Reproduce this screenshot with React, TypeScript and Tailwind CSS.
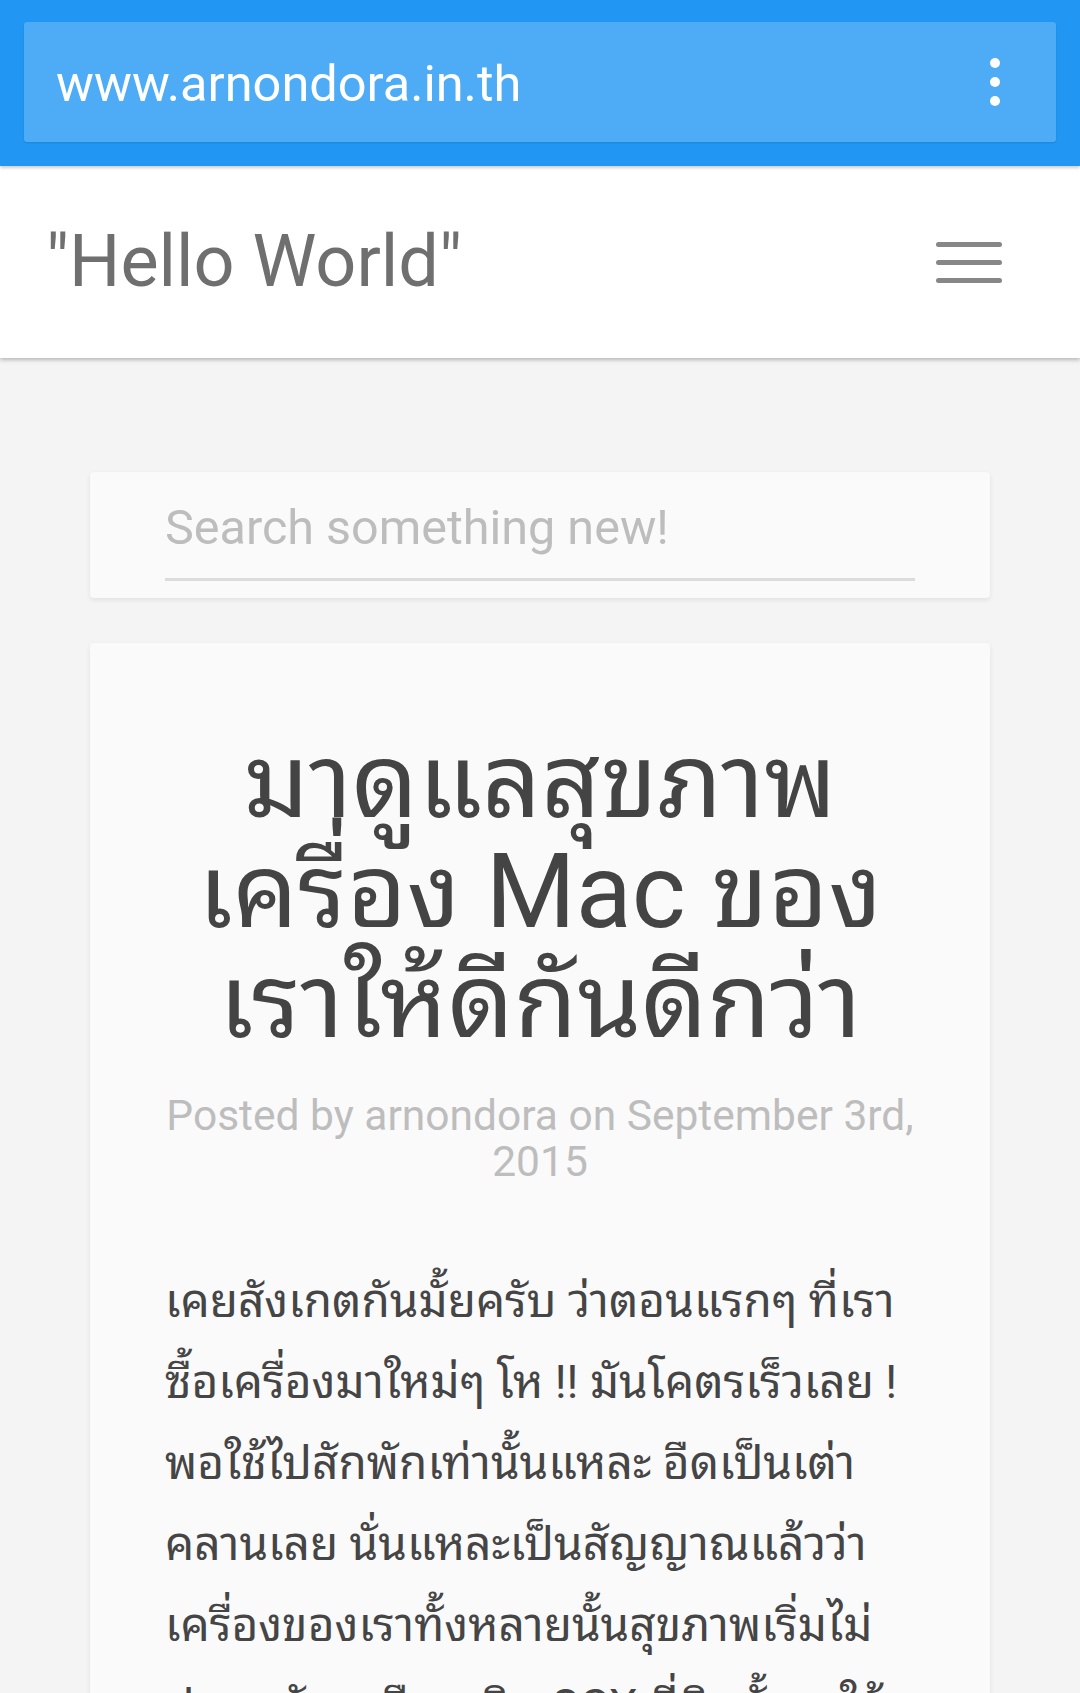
import React from "react";

export default function App() {
  const body = [
    "เคยสังเกตกันมั้ยครับ ว่าตอนแรกๆ ที่เรา",
    "ซื้อเครื่องมาใหม่ๆ โห !! มันโคตรเร็วเลย !",
    "พอใช้ไปสักพักเท่านั้นแหละ อืดเป็นเต่า",
    "คลานเลย นั่นแหละเป็นสัญญาณแล้วว่า",
    "เครื่องของเราทั้งหลายนั้นสุขภาพเริ่มไม่",
    "ปลอดภัยเหมือนเดิม OSX ที่ติดตั้งมาให้",
  ];
  return (
    <div className="w-[1080px] h-[1693px] overflow-hidden bg-[#f4f4f4] font-['Roboto','Noto_Sans_Thai_Looped','Loma','Garuda','Tlwg_Typist','Noto_Sans','Noto_Sans_Thai',sans-serif]">
      {/* browser bar */}
      <div className="relative z-20 h-[166px] bg-[#2196f3] px-[24px] pt-[22px] shadow-[0_2px_3px_rgba(0,0,0,0.2)]">
        <div className="flex h-[120px] items-center justify-between rounded-[3px] bg-[#4eabf5] pl-[32px] pr-[56px] shadow-[0_1px_2px_rgba(0,0,0,0.12)]">
          <span className="mt-[4px] text-[50.5px] leading-none text-white">www.arnondora.in.th</span>
          <div className="flex flex-col items-center gap-[9px]">
            <span className="block h-[10px] w-[10px] rounded-full bg-white" />
            <span className="block h-[10px] w-[10px] rounded-full bg-white" />
            <span className="block h-[10px] w-[10px] rounded-full bg-white" />
          </div>
        </div>
      </div>

      {/* site header */}
      <div className="relative z-10 flex h-[192px] items-center justify-between bg-white pl-[46px] pr-[78px] shadow-[0_2px_4px_rgba(0,0,0,0.25)]">
        <span className="text-[72px] leading-none text-[#6f6f6f]">"Hello World"</span>
        <div className="flex flex-col gap-[13px]">
          <span className="block h-[5px] w-[66px] rounded-full bg-[#878787]" />
          <span className="block h-[5px] w-[66px] rounded-full bg-[#878787]" />
          <span className="block h-[5px] w-[66px] rounded-full bg-[#878787]" />
        </div>
      </div>

      <div className="px-[90px] pt-[114px]">
        {/* search card */}
        <div className="h-[126px] rounded-[4px] bg-[#fafafa] px-[75px] pt-[26px] shadow-[0_2px_5px_rgba(0,0,0,0.08)]">
          <div className="border-b-[3px] border-[#dcdcdc] pb-[20px] text-[48.5px] leading-[60px] text-[#bdbdbd]">
            Search something new!
          </div>
        </div>

        {/* article card */}
        <div className="mt-[45px] h-[1200px] rounded-[4px] bg-[#fafafa] px-[75px] pt-[84px] shadow-[0_2px_5px_rgba(0,0,0,0.08)]">
          <h1 className="text-center text-[103px] font-normal leading-[110px] text-[#444444]">
            <span className="block whitespace-nowrap">มาดูแลสุขภาพ</span>
            <span className="block whitespace-nowrap">เครื่อง Mac ของ</span>
            <span className="block whitespace-nowrap">เราให้ดีกันดีกว่า</span>
          </h1>
          <p className="mt-[36px] text-center text-[42.5px] leading-[46px] text-[#bdbdbd]">
            Posted by arnondora on September 3rd,
            <br />
            2015
          </p>
          <div className="mt-[76px] text-[46px] leading-[81px] text-[#454545]">
            {body.map((l, i) => (
              <span key={i} className="block whitespace-nowrap">
                {l}
              </span>
            ))}
          </div>
        </div>
      </div>
    </div>
  );
}
